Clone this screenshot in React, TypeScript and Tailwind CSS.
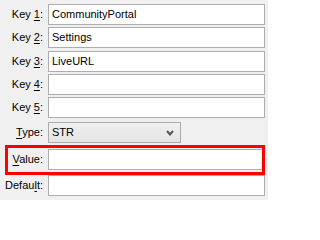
import React from 'react';

const Label: React.FC<{ pre: string; key2?: string; acc: string; post: string }> = ({ pre, acc, post }) => (
  <span className="w-[43px] shrink-0 text-right whitespace-nowrap">
    {pre}
    <span className="underline underline-offset-2">{acc}</span>
    {post}
  </span>
);

const Field: React.FC<{ value?: string }> = ({ value }) => (
  <div className="ml-[5px] h-[21px] w-[217px] border border-[#adadad] bg-white pl-[3px] leading-[19px] text-black">
    {value}
  </div>
);

const App: React.FC = () => {
  const keys = [
    { n: '1', v: 'CommunityPortal', mt: 'mt-[4px]' },
    { n: '2', v: 'Settings', mt: 'mt-[2px]' },
    { n: '3', v: 'LiveURL', mt: 'mt-[3px]' },
    { n: '4', v: '', mt: 'mt-[2px]' },
    { n: '5', v: '', mt: 'mt-[2px]' },
  ];

  return (
    <div
      className="relative h-[200px] w-[268px] overflow-hidden bg-[#f0f0f0] text-[11px] text-black"
      style={{ fontFamily: '"Liberation Sans", Arial, sans-serif' }}
    >
      <div className="flex flex-col">
        {keys.map((k) => (
          <div key={k.n} className={`flex items-center ${k.mt}`}>
            <Label pre="Key " acc={k.n} post=":" />
            <Field value={k.v} />
          </div>
        ))}

        <div className="mt-[4px] flex items-center">
          <Label pre="" acc="T" post="ype:" />
          <div className="ml-[5px] flex h-[21px] w-[133px] items-center justify-between border border-[#acacac] bg-gradient-to-b from-[#f0f0f0] to-[#e5e5e5] pl-[3px] pr-[6px]">
            <span>STR</span>
            <svg width="8" height="6" viewBox="0 0 8 6">
              <path d="M1 1 L4 4.5 L7 1" fill="none" stroke="#555" strokeWidth="2" />
            </svg>
          </div>
        </div>

        <div className="mt-[6px] flex items-center">
          <Label pre="" acc="V" post="alue:" />
          <Field />
        </div>

        <div className="mt-[5px] flex items-center">
          <Label pre="Defau" acc="l" post="t:" />
          <Field />
        </div>
      </div>

      <div className="absolute left-[5px] top-[145px] h-[30px] w-[260px] border-[3px] border-[#ff0000]" />
    </div>
  );
};

export default App;
